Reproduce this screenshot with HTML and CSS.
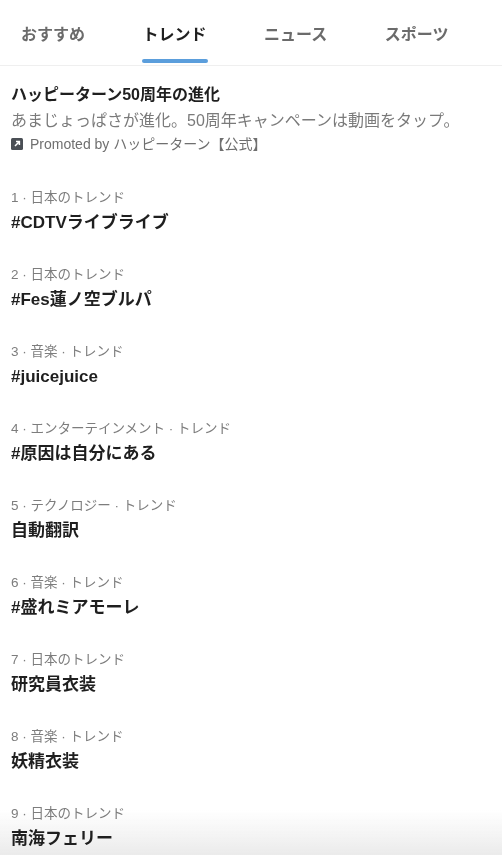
FILE: index.html
```html
<!DOCTYPE html>
<html lang="ja">
<head>
<meta charset="utf-8">
<link rel="stylesheet" href="styles.css">
</head>
<body>
<nav class="tabs">
  <div class="tab">おすすめ</div>
  <div class="tab active">トレンド</div>
  <div class="tab">ニュース</div>
  <div class="tab">スポーツ</div>
</nav>
<section class="promo">
  <div class="promo-title">ハッピーターン50周年の進化</div>
  <div class="promo-desc">あまじょっぱさが進化。50周年キャンペーンは動画をタップ。</div>
  <div class="promo-by"><svg class="promo-icon" viewBox="0 0 12 12" width="12" height="12"><rect x="0" y="0" width="12" height="12" rx="1.5" fill="#4a4f55"/><path d="M4 8 L8.2 3.8 M5 3.6 H8.4 V7" stroke="#fff" stroke-width="1.5" fill="none"/></svg>Promoted by ハッピーターン【公式】</div>
</section>
<ul class="trends">
  <li class="trend"><div class="meta">1 · 日本のトレンド</div><div class="name">#CDTVライブライブ</div></li>
  <li class="trend"><div class="meta">2 · 日本のトレンド</div><div class="name">#Fes蓮ノ空ブルパ</div></li>
  <li class="trend"><div class="meta">3 · 音楽 · トレンド</div><div class="name">#juicejuice</div></li>
  <li class="trend"><div class="meta">4 · エンターテインメント · トレンド</div><div class="name">#原因は自分にある</div></li>
  <li class="trend"><div class="meta">5 · テクノロジー · トレンド</div><div class="name">自動翻訳</div></li>
  <li class="trend"><div class="meta">6 · 音楽 · トレンド</div><div class="name">#盛れミアモーレ</div></li>
  <li class="trend"><div class="meta">7 · 日本のトレンド</div><div class="name">研究員衣装</div></li>
  <li class="trend"><div class="meta">8 · 音楽 · トレンド</div><div class="name">妖精衣装</div></li>
  <li class="trend"><div class="meta">9 · 日本のトレンド</div><div class="name">南海フェリー</div></li>
</ul>
<div class="fade"></div>
</body>
</html>
```
FILE: styles.css
```css
html {
  background: #fff;
}
html, body {
  margin: 0;
  padding: 0;
  height: 855px;
  overflow: hidden;
  font-family: "Liberation Sans", "Noto Sans CJK JP", sans-serif;
  color: #1f1f1f;
}
.tabs {
  display: flex;
  gap: 57.5px;
  padding-left: 21px;
  height: 65px;
  border-bottom: 1px solid #efefef;
}
.tab {
  position: relative;
  font-size: 16px;
  font-weight: bold;
  color: #6b6b6b;
  line-height: 70px;
  height: 65px;
}
.tab.active {
  color: #1f1f1f;
}
.tab.active::after {
  content: "";
  position: absolute;
  left: -1px;
  right: -1px;
  bottom: 2px;
  height: 4px;
  border-radius: 2px;
  background: #5b9edc;
}
.promo {
  padding: 17px 11px 18px;
}
.promo-title {
  font-size: 16px;
  font-weight: bold;
  line-height: 24px;
  color: #1f1f1f;
}
.promo-desc {
  margin-top: 2px;
  font-size: 16px;
  line-height: 24px;
  color: #7a7a7a;
}
.promo-by {
  margin-top: 1px;
  display: flex;
  align-items: center;
  gap: 7px;
  font-size: 14px;
  line-height: 20px;
  color: #6f6f6f;
}
.promo-icon {
  flex: none;
}
.trends {
  list-style: none;
  margin: 0;
  padding: 0;
}
.trend {
  padding: 16px 11px 14px;
}
.meta {
  font-size: 13.5px;
  line-height: 20px;
  color: #7d7d7d;
}
.name {
  margin-top: 3px;
  font-size: 17px;
  font-weight: bold;
  line-height: 24px;
  color: #1f1f1f;
}
.fade {
  position: fixed;
  z-index: -1;
  left: 0;
  right: 0;
  bottom: 0;
  height: 45px;
  background: linear-gradient(to bottom, rgba(235,235,235,0), #ebebeb);
  pointer-events: none;
}
```
